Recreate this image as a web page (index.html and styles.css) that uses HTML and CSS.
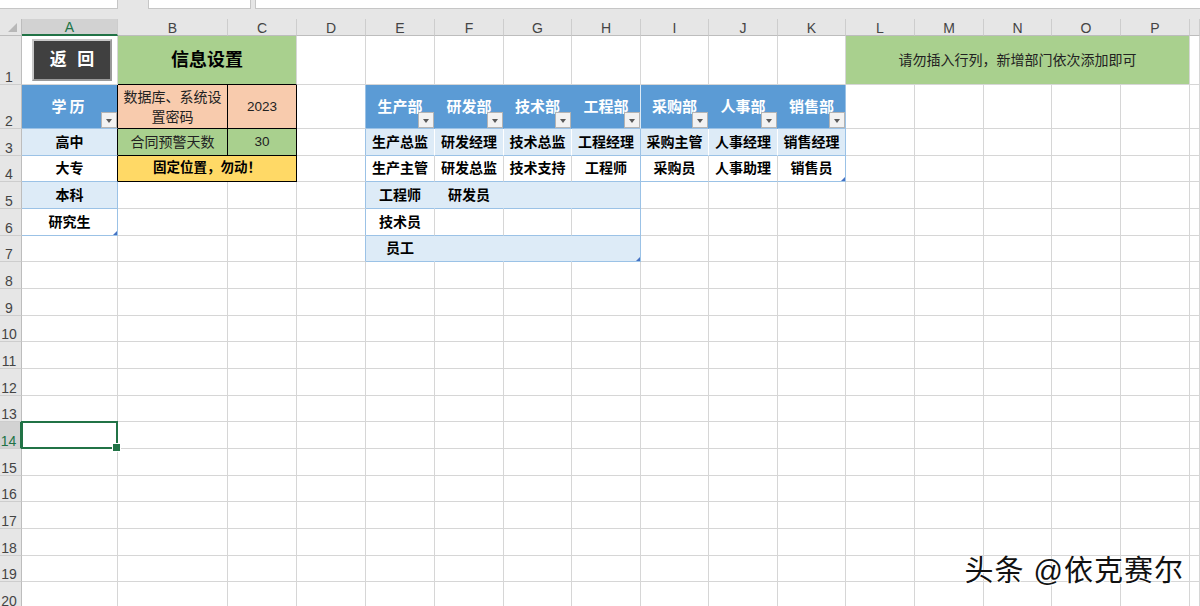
FILE: index.html
```html
<!DOCTYPE html>
<html lang="zh-CN">
  <head>
    <meta charset="UTF-8" />
    <title>信息设置</title>
    <link rel="stylesheet" href="styles.css">
  </head>
  <body>
    <div class="formula-bar">
      <div class="box name-box"></div>
      <div class="box fx-box"></div>
      <div class="box formula-input"></div>
    </div>

    <div class="sheet" id="sheet">
      <!-- cells are built by the script below -->
    </div>

    <div class="watermark">头条 @依克赛尔</div>

    <script>
      const COLS = "ABCDEFGHIJKLMNOPQ".split("");
      const ROW_COUNT = 20;
      const active = { col: "A", row: 14 };

      // only cells that have content or a non-default border
      const cells = {
        A1: { html: '<span class="back-btn">返 回</span>', cls: "btn-cell" },
        B1: { text: "信息设置", cls: "title bb-black", span: 2 },
        L1: { text: "请勿插入行列，新增部门依次添加即可", cls: "note", span: 5 },

        A2: { text: "学历", cls: "th wide br-black bb-blue", filter: true },
        B2: { text: "数据库、系统设置密码", cls: "peach br-black bb-black" },
        C2: { text: "2023", cls: "peach num br-black bb-black" },
        D2: { cls: "br-blue" },
        E2: { text: "生产部", cls: "th br-th bb-blue", filter: true },
        F2: { text: "研发部", cls: "th br-th bb-blue", filter: true },
        G2: { text: "技术部", cls: "th br-th bb-blue", filter: true },
        H2: { text: "工程部", cls: "th br-band bb-blue", filter: true },
        I2: { text: "采购部", cls: "th br-th bb-blue", filter: true },
        J2: { text: "人事部", cls: "th br-th bb-blue", filter: true },
        K2: { text: "销售部", cls: "th br-blue bb-blue", filter: true },

        A3: { text: "高中", cls: "band b br-black bb-blue" },
        B3: { text: "合同预警天数", cls: "green br-black bb-black" },
        C3: { text: "30", cls: "green num br-black bb-black" },
        D3: { cls: "br-blue" },
        E3: { text: "生产总监", cls: "band b br-white bb-blue" },
        F3: { text: "研发经理", cls: "band b br-white bb-blue" },
        G3: { text: "技术总监", cls: "band b br-white bb-blue" },
        H3: { text: "工程经理", cls: "band b br-blue bb-blue" },
        I3: { text: "采购主管", cls: "band b br-white bb-blue" },
        J3: { text: "人事经理", cls: "band b br-white bb-blue" },
        K3: { text: "销售经理", cls: "band b br-blue bb-blue" },

        A4: { text: "大专", cls: "b br-black bb-blue" },
        B4: { text: "固定位置，勿动！", cls: "yellow br-black bb-black", span: 2 },
        D4: { cls: "br-blue" },
        E4: { text: "生产主管", cls: "b bb-blue" },
        F4: { text: "研发总监", cls: "b bb-blue" },
        G4: { text: "技术支持", cls: "b bb-blue" },
        H4: { text: "工程师", cls: "b br-blue bb-blue" },
        I4: { text: "采购员", cls: "b bb-blue" },
        J4: { text: "人事助理", cls: "b bb-blue" },
        K4: { text: "销售员", cls: "b br-blue bb-blue", resize: true },

        A5: { text: "本科", cls: "band b br-blue bb-blue" },
        D5: { cls: "br-blue" },
        E5: { text: "工程师", cls: "band b br-band bb-blue" },
        F5: { text: "研发员", cls: "band b br-band bb-blue" },
        G5: { cls: "band br-band bb-blue" },
        H5: { cls: "band br-blue bb-blue" },

        A6: { text: "研究生", cls: "b br-blue bb-blue", resize: true },
        D6: { cls: "br-blue" },
        E6: { text: "技术员", cls: "b bb-blue" },
        F6: { cls: "bb-blue" },
        G6: { cls: "bb-blue" },
        H6: { cls: "br-blue bb-blue" },

        D7: { cls: "br-blue" },
        E7: { text: "员工", cls: "band b br-band bb-blue" },
        F7: { cls: "band br-band bb-blue" },
        G7: { cls: "band br-band bb-blue" },
        H7: { cls: "band br-blue bb-blue", resize: true },
      };

      function buildSheet() {
        let html = '<div class="corner"></div>';
        COLS.forEach((c) => {
          const cur = c === active.col ? " current" : "";
          html += `<div class="col-head${cur}">${c === "Q" ? "" : c}</div>`;
        });

        for (let r = 1; r <= ROW_COUNT; r++) {
          const cur = r === active.row ? " current" : "";
          html += `<div class="row-head${cur}">${r}</div>`;

          let skip = 0;
          COLS.forEach((c) => {
            if (skip > 0) {
              skip--;
              return;
            }
            const cell = cells[c + r] || {};
            const span = cell.span || 1;
            skip = span - 1;

            let cls = "cell";
            if (cell.cls) cls += " " + cell.cls;
            if (span > 1) cls += " span-" + span;
            if (c === active.col && r === active.row) cls += " active";

            let inner = cell.html || cell.text || "";
            if (cell.filter) inner += '<span class="filter"></span>';
            if (cell.resize) inner += '<span class="resize"></span>';
            html += `<div class="${cls}">${inner}</div>`;
          });
        }

        document.getElementById("sheet").innerHTML = html;
      }

      buildSheet();
    </script>
  </body>
</html>
```

FILE: styles.css
```css
* {
  box-sizing: border-box;
}
html,
body {
  margin: 0;
}
body {
  position: relative;
  width: 1200px;
  height: 606px;
  overflow: hidden;
  background: #fff;
  font-family: "Liberation Sans", "Noto Sans CJK SC", sans-serif;
  color: #000;
}

/* formula bar remnant at the top */
.formula-bar {
  display: flex;
  height: 19px;
  background: #e6e6e6;
}
.formula-bar .box {
  height: 9px;
  background: #fff;
  border: 1px solid #c6c6c6;
  border-top: none;
}
.name-box {
  width: 118px;
  margin-right: 30px;
  border-left: none !important;
}
.fx-box {
  width: 103px;
  margin-right: 4px;
}
.formula-input {
  flex: 1;
  border-right: none !important;
}

/* grid */
.sheet {
  display: grid;
  grid-template-columns:
    22px 96px 110px 69px 69px 69px 69px 68px 69px
    68px 69px 68px 69px 69px 68px 69px 69px 1fr;
  grid-template-rows: 17px 49px 44px repeat(18, 26.67px);
}
.corner,
.col-head,
.row-head {
  position: relative;
  display: flex;
  align-items: flex-end;
  justify-content: center;
  background: #e6e6e6;
  color: #444;
  font-size: 14px;
  line-height: 1;
}
.corner {
  border-right: 1px solid #bdbdbd;
  border-bottom: 1px solid #bdbdbd;
}
.corner::after {
  content: "";
  position: absolute;
  right: 4px;
  bottom: 3px;
  border-style: solid;
  border-width: 0 0 9px 9px;
  border-color: transparent transparent #b8b8b8 transparent;
}
.col-head {
  border-right: 1px solid #cdcdcd;
  border-bottom: 1px solid #bdbdbd;
}
.row-head {
  border-right: 1px solid #bdbdbd;
  border-bottom: 1px solid #cdcdcd;
  padding-right: 3px;
}
.col-head.current {
  background: #d2d2d2;
  color: #217346;
  border-bottom: 2px solid #217346;
}
.row-head.current {
  background: #d2d2d2;
  color: #217346;
  border-right: 2px solid #217346;
}

.cell {
  position: relative;
  display: flex;
  align-items: center;
  justify-content: center;
  border-right: 1px solid #d6d6d6;
  border-bottom: 1px solid #d6d6d6;
  font-size: 14px;
  line-height: 20px;
  text-align: center;
  color: #222;
}
.span-2 {
  grid-column: span 2;
}
.span-5 {
  grid-column: span 5;
}

/* fills */
.th {
  background: #5b9bd5;
  color: #fff;
  font-size: 15px;
  font-weight: 700;
}
.th.wide {
  letter-spacing: 3px;
}
.band {
  background: #ddebf7;
}
.b {
  font-weight: 700;
  color: #000;
}
.title {
  background: #a9d08e;
  font-size: 18px;
  font-weight: 700;
  color: #000;
}
.note {
  background: #a9d08e;
  color: #222;
}
.peach {
  background: #f8cbad;
  padding: 0 4px;
}
.green {
  background: #a9d08e;
}
.yellow {
  background: #ffd966;
  font-size: 13.5px;
  font-weight: 700;
  color: #000;
}
.num {
  font-size: 13.5px;
}

/* borders */
.br-black {
  border-right-color: #000;
}
.bb-black {
  border-bottom-color: #000;
}
.br-blue {
  border-right-color: #9bc2e6;
}
.bb-blue {
  border-bottom-color: #9bc2e6;
}
.br-white {
  border-right-color: #fff;
}
.br-th {
  border-right-color: #5b9bd5;
}
.br-band {
  border-right-color: #ddebf7;
}

/* back button */
.btn-cell {
  justify-content: flex-start;
  padding-left: 10px;
}
.back-btn {
  display: flex;
  align-items: center;
  justify-content: center;
  width: 80px;
  height: 42px;
  background: #404040;
  border: 2px solid #c8c8c8;
  border-right-color: #9a9a9a;
  border-bottom-color: #9a9a9a;
  color: #fff;
  font-size: 17px;
  font-weight: 700;
  letter-spacing: 3px;
  padding-left: 3px;
}

/* filter dropdown */
.filter {
  position: absolute;
  right: 0;
  bottom: 0;
  width: 16px;
  height: 16px;
  background: #f2f2f2;
  border: 1px solid #b4b4b4;
}
.filter::after {
  content: "";
  position: absolute;
  left: 4px;
  top: 6px;
  border-style: solid;
  border-width: 4px 3.5px 0 3.5px;
  border-color: #595959 transparent transparent transparent;
}

/* table resize handle */
.resize {
  position: absolute;
  right: 0;
  bottom: 0;
  border-style: solid;
  border-width: 0 0 4px 4px;
  border-color: transparent transparent #4472c4 transparent;
}

/* selected cell */
.cell.active {
  z-index: 2;
}
.cell.active::before {
  content: "";
  position: absolute;
  left: -1px;
  top: -1px;
  right: -1px;
  bottom: -1px;
  border: 2px solid #217346;
}
.cell.active::after {
  content: "";
  position: absolute;
  right: -4px;
  bottom: -4px;
  width: 7px;
  height: 7px;
  background: #217346;
  border: 1px solid #fff;
}

.watermark {
  position: absolute;
  right: 16px;
  top: 555px;
  font-size: 29px;
  line-height: 32px;
  letter-spacing: 1px;
  color: #111;
  text-shadow: 1px 1px 0 #fff, -1px 0 0 #fff;
}
```
